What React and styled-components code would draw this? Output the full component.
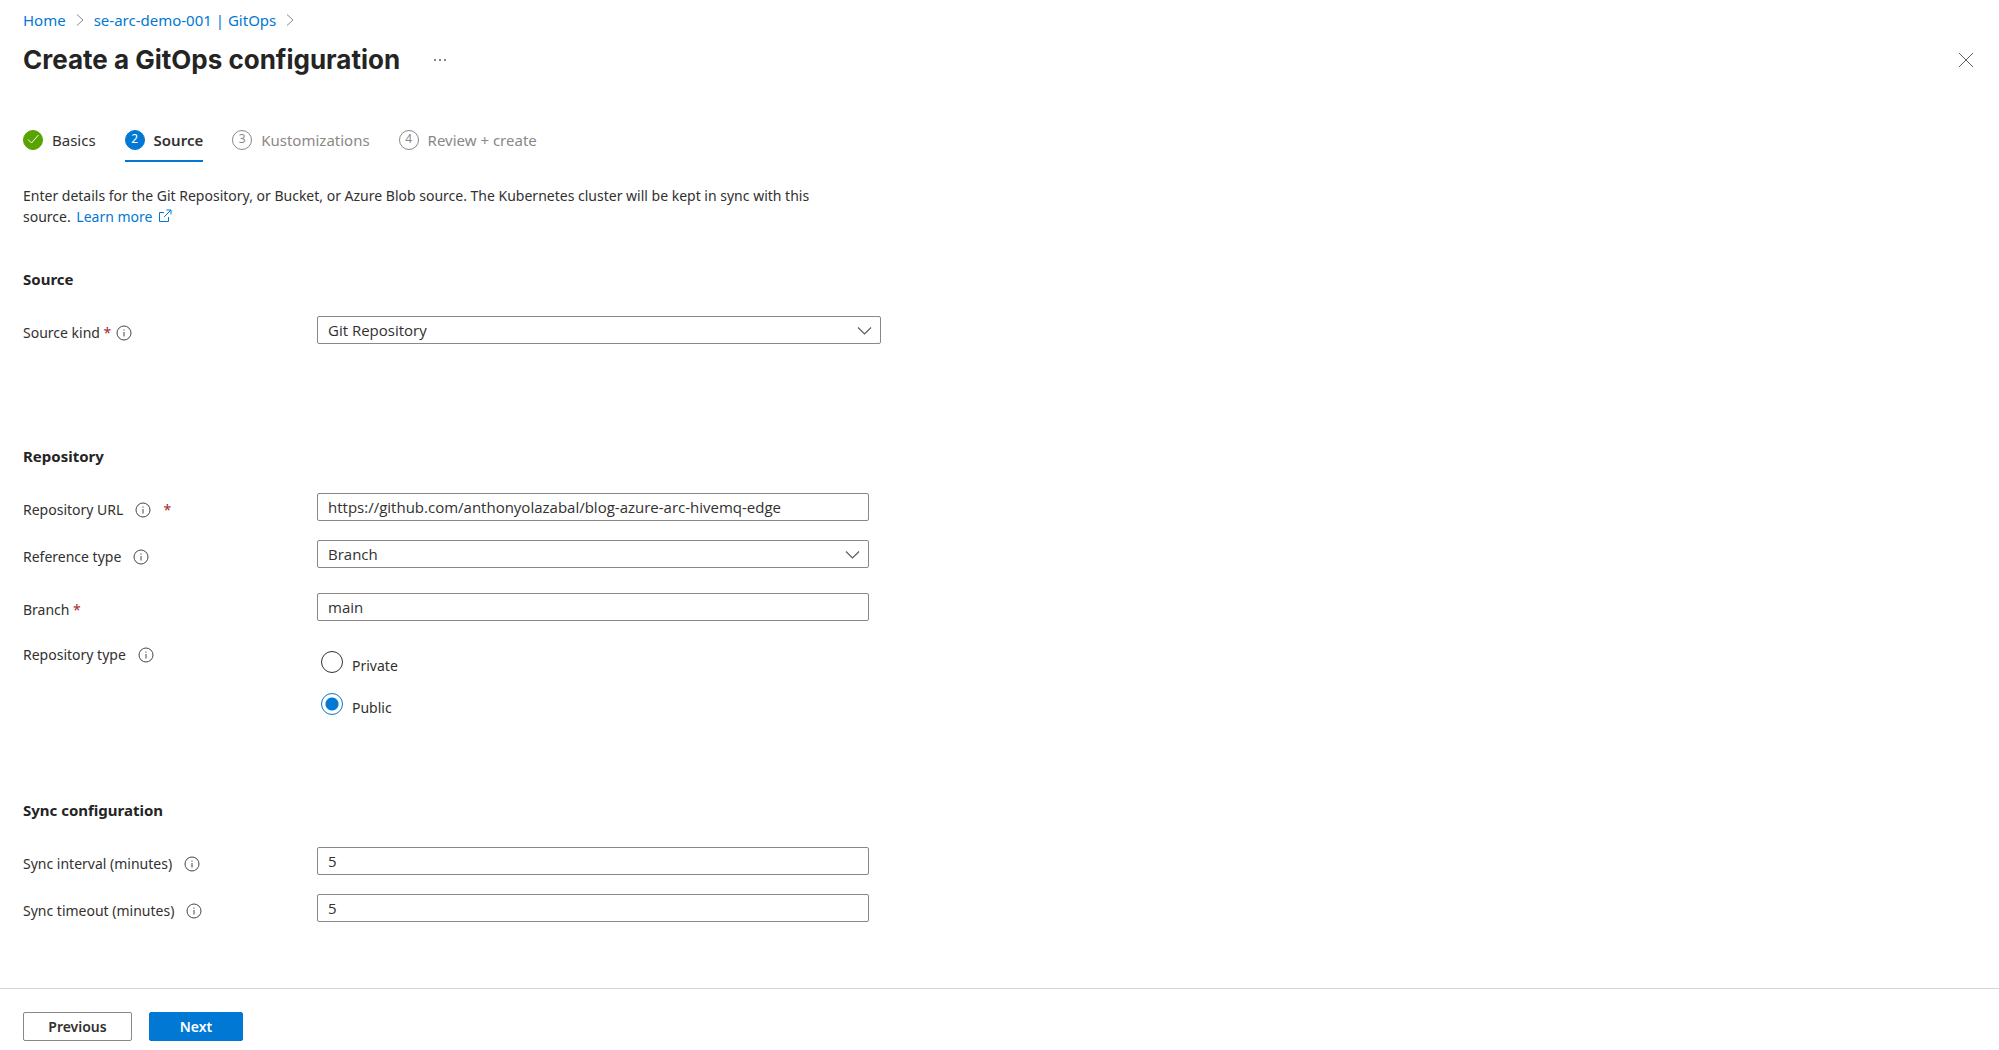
import React, { useState } from 'react';
import styled, { createGlobalStyle, css } from 'styled-components';

const GlobalStyle = createGlobalStyle`
  * {
    box-sizing: border-box;
  }
  body {
    margin: 0;
    background: #fff;
    color: #323130;
    font-family: 'Noto Sans', 'Open Sans', sans-serif;
    font-size: 14px;
    line-height: 21px;
  }
  button,
  input,
  select {
    font: inherit;
    color: inherit;
  }
`;

const Page = styled.div`
  display: flex;
  flex-direction: column;
  min-height: 100vh;
`;

const Link = styled.a`
  color: #0078d4;
  text-decoration: none;
  &:hover {
    text-decoration: underline;
  }
`;

const Breadcrumb = styled.nav`
  display: flex;
  align-items: center;
  gap: 9px;
  padding: 9px 23px 0;
  font-size: 15px;
  line-height: 22px;
`;

const Header = styled.header`
  display: flex;
  align-items: center;
  padding: 11px 25px 0 23px;
`;

const Title = styled.h1`
  margin: 0;
  color: #242424;
  font-family: Inter, sans-serif;
  font-size: 26px;
  font-weight: 700;
  line-height: 36px;
`;

const IconButton = styled.button`
  display: flex;
  padding: 0;
  border: 0;
  background: none;
  cursor: pointer;
`;

const MoreButton = styled(IconButton)`
  margin-left: 32px;
`;

const CloseButton = styled(IconButton)`
  margin-left: auto;
`;

const Steps = styled.nav`
  display: flex;
  align-items: flex-start;
  gap: 29px;
  padding: 51px 23px 0;
`;

const Step = styled.a`
  display: flex;
  align-items: center;
  gap: 9px;
  padding-bottom: 9px;
  border-bottom: 2px solid transparent;
  color: ${({ $state }) => ($state === 'todo' ? '#8a8886' : '#323130')};
  font-size: 15px;
  line-height: 22px;
  text-decoration: none;
  ${({ $state }) =>
    $state === 'active' &&
    css`
      border-color: #0078d4;
      font-weight: 600;
    `}
`;

const stepColors = {
  done: css`
    background: #57a300;
    border-color: #57a300;
    color: #fff;
  `,
  active: css`
    background: #0078d4;
    border-color: #0078d4;
    color: #fff;
  `,
  todo: css`
    border-color: #8a8886;
    color: #8a8886;
  `,
};

const StepBadge = styled.span`
  display: flex;
  justify-content: center;
  width: 20px;
  height: 20px;
  border: 1px solid;
  border-radius: 50%;
  font-size: 12px;
  font-weight: 400;
  line-height: 15px;
  ${({ $state }) => stepColors[$state]}
`;

const Main = styled.main`
  flex: 1;
  padding: 0 23px 66px;
`;

const Intro = styled.p`
  max-width: 820px;
  margin: 23px 0 0;
`;

const LearnMore = styled(Link)`
  margin-left: 2px;
  svg {
    margin-left: 2px;
    vertical-align: -1px;
  }
`;

const Section = styled.section`
  margin-top: ${({ $space }) => $space}px;
`;

const SectionTitle = styled.h2`
  margin: 0 0 26px;
  color: #242424;
  font-size: 15px;
  font-weight: 700;
  line-height: 22px;
`;

const Field = styled.div`
  display: grid;
  grid-template-columns: 294px minmax(0, ${({ $wide }) => ($wide ? 564 : 552)}px);
  align-items: start;
  margin-top: ${({ $space = 0 }) => $space}px;
`;

const LabelCell = styled.div`
  display: flex;
  align-items: center;
  gap: ${({ $tight }) => ($tight ? 5 : 12)}px;
  padding-top: 6px;
`;

const Required = styled.span`
  color: #a4262c;
`;

const control = css`
  width: 100%;
  height: 28px;
  padding: 0 10px;
  border: 1px solid #8a8886;
  border-radius: 2px;
  background: #fff;
  font-family: 'Open Sans', 'Noto Sans', sans-serif;
  font-size: 15px;
`;

const TextInput = styled.input`
  ${control}
`;

const SelectBox = styled.div`
  position: relative;
  display: flex;
  svg {
    position: absolute;
    top: 9px;
    right: 9px;
    pointer-events: none;
  }
`;

const Select = styled.select`
  ${control}
  appearance: none;
`;

const RadioGroup = styled.div`
  display: grid;
  gap: 20px;
  padding: 13px 0 0 4px;
`;

const RadioLabel = styled.label`
  display: flex;
  gap: 9px;
  height: 22px;
  span {
    padding-top: 4px;
  }
`;

const Radio = styled.input`
  appearance: none;
  flex: none;
  width: 22px;
  height: 22px;
  margin: 0;
  border: 1px solid #323130;
  border-radius: 50%;
  &:checked {
    border-color: #0078d4;
    background: radial-gradient(circle, #0078d4 6px, transparent 7px);
  }
`;

const Footer = styled.footer`
  display: flex;
  gap: 17px;
  padding: 23px 23px 9px;
  border-top: 1px solid #d6d6d6;
`;

const Button = styled.button`
  min-width: ${({ $primary }) => ($primary ? 94 : 109)}px;
  height: 29px;
  padding: 0 16px;
  border: 1px solid ${({ $primary }) => ($primary ? '#0078d4' : '#8a8886')};
  border-radius: 2px;
  background: ${({ $primary }) => ($primary ? '#0078d4' : '#fff')};
  color: ${({ $primary }) => ($primary ? '#fff' : '#323130')};
  font-weight: 600;
  cursor: pointer;
`;

const Chevron = () => (
  <svg width="10" height="14" viewBox="0 0 10 14" fill="none" stroke="#8a8886">
    <path d="M2 1.5 8 7 2 12.5" />
  </svg>
);

const ChevronDown = () => (
  <svg width="15" height="12" viewBox="0 0 15 12" fill="none" stroke="#605e5c" strokeWidth="1.2">
    <path d="M1 2.5 7.5 9 14 2.5" />
  </svg>
);

const InfoIcon = () => (
  <svg width="16" height="16" viewBox="0 0 16 16" fill="none" stroke="#484644">
    <circle cx="8" cy="8" r="7" />
    <path d="M8 7v4.5M8 4.5v1.2" />
  </svg>
);

const ExternalIcon = () => (
  <svg width="14" height="14" viewBox="0 0 14 14" fill="none" stroke="#0078d4">
    <path d="M6 3.5H1.5v9h9V8M8.500 1H13v4.500M13 1 6 8" />
  </svg>
);

const steps = [
  { label: 'Basics', state: 'done' },
  { label: 'Source', state: 'active' },
  { label: 'Kustomizations', state: 'todo' },
  { label: 'Review + create', state: 'todo' },
];

const Label = ({ htmlFor, id, text, info, required, tight }) => (
  <LabelCell $tight={tight}>
    <label htmlFor={htmlFor} id={id}>
      {text}
      {required && tight && <Required> *</Required>}
    </label>
    {info && <InfoIcon />}
    {required && !tight && <Required>*</Required>}
  </LabelCell>
);

const Dropdown = ({ id, options }) => (
  <SelectBox>
    <Select id={id}>
      {options.map((option) => (
        <option key={option}>{option}</option>
      ))}
    </Select>
    <ChevronDown />
  </SelectBox>
);

const App = () => {
  const [repoType, setRepoType] = useState('Public');

  return (
    <Page>
      <GlobalStyle />
      <Breadcrumb>
        <Link href="#home">Home</Link>
        <Chevron />
        <Link href="#gitops">se-arc-demo-001 | GitOps</Link>
        <Chevron />
      </Breadcrumb>
      <Header>
        <Title>Create a GitOps configuration</Title>
        <MoreButton aria-label="More">
          <svg width="16" height="16" viewBox="0 0 16 16" fill="#605e5c">
            <circle cx="3" cy="8" r="1" />
            <circle cx="8" cy="8" r="1" />
            <circle cx="13" cy="8" r="1" />
          </svg>
        </MoreButton>
        <CloseButton aria-label="Close">
          <svg width="16" height="16" viewBox="0 0 16 16" stroke="#605e5c">
            <path d="m1 1 14 14M15 1 1 15" />
          </svg>
        </CloseButton>
      </Header>
      <Steps>
        {steps.map(({ label, state }, i) => (
          <Step key={label} href={`#${label}`} $state={state}>
            <StepBadge $state={state}>
              {state === 'done' ? (
                <svg width="12" height="16" viewBox="0 0 12 16" fill="none" stroke="#fff">
                  <path d="m1 8.500 3.500 3.500 7-8" />
                </svg>
              ) : (
                i + 1
              )}
            </StepBadge>
            {label}
          </Step>
        ))}
      </Steps>
      <Main>
        <Intro>
          Enter details for the Git Repository, or Bucket, or Azure Blob source. The Kubernetes
          cluster will be kept in sync with this source.{' '}
          <LearnMore href="#learn">
            Learn more <ExternalIcon />
          </LearnMore>
        </Intro>

        <Section $space={41}>
          <SectionTitle>Source</SectionTitle>
          <Field $wide>
            <Label htmlFor="kind" text="Source kind" required info tight />
            <Dropdown id="kind" options={['Git Repository', 'Bucket', 'Azure Blob']} />
          </Field>
        </Section>

        <Section $space={101}>
          <SectionTitle>Repository</SectionTitle>
          <Field>
            <Label htmlFor="url" text="Repository URL" info required />
            <TextInput
              id="url"
              defaultValue="https://github.com/anthonyolazabal/blog-azure-arc-hivemq-edge"
            />
          </Field>
          <Field $space={19}>
            <Label htmlFor="ref" text="Reference type" info />
            <Dropdown id="ref" options={['Branch', 'Tag', 'Commit']} />
          </Field>
          <Field $space={25}>
            <Label htmlFor="branch" text="Branch" required tight />
            <TextInput id="branch" defaultValue="main" />
          </Field>
          <Field $space={17}>
            <Label id="repo-type" text="Repository type" info />
            <RadioGroup role="radiogroup" aria-labelledby="repo-type">
              {['Private', 'Public'].map((type) => (
                <RadioLabel key={type}>
                  <Radio
                    type="radio"
                    name="repoType"
                    checked={repoType === type}
                    onChange={() => setRepoType(type)}
                  />
                  <span>{type}</span>
                </RadioLabel>
              ))}
            </RadioGroup>
          </Field>
        </Section>

        <Section $space={84}>
          <SectionTitle>Sync configuration</SectionTitle>
          <Field>
            <Label htmlFor="interval" text="Sync interval (minutes)" info />
            <TextInput id="interval" defaultValue="5" />
          </Field>
          <Field $space={19}>
            <Label htmlFor="timeout" text="Sync timeout (minutes)" info />
            <TextInput id="timeout" defaultValue="5" />
          </Field>
        </Section>
      </Main>
      <Footer>
        <Button type="button">Previous</Button>
        <Button type="button" $primary>
          Next
        </Button>
      </Footer>
    </Page>
  );
};

export default App;
